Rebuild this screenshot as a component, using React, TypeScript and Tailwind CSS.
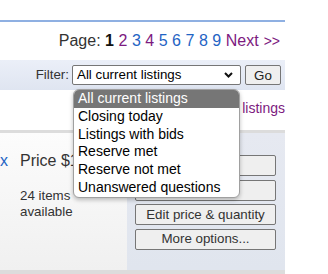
import React from 'react';

const pages = [
  { n: '1', cls: 'font-bold text-[#111]' },
  { n: '2', cls: 'text-[#7d1a80]' },
  { n: '3', cls: 'text-[#1f64c4]' },
  { n: '4', cls: 'text-[#7d1a80]' },
  { n: '5', cls: 'text-[#1f64c4]' },
  { n: '6', cls: 'text-[#1f64c4]' },
  { n: '7', cls: 'text-[#1f64c4]' },
  { n: '8', cls: 'text-[#1f64c4]' },
  { n: '9', cls: 'text-[#1f64c4]' },
];

const filters = [
  'All current listings',
  'Closing today',
  'Listings with bids',
  'Reserve met',
  'Reserve not met',
  'Unanswered questions',
];

const actions = ['Relist', 'Sell similar', 'Edit price & quantity', 'More options...'];

export default function App() {
  return (
    <div className="relative w-[328px] h-[274px] overflow-hidden bg-white font-['Liberation_Sans',Arial,sans-serif] text-[#333]">
      <div className="w-[285px]">
        <div className="h-[20px]" />
        <div className="h-[2px] bg-[#8fb0e2]" />

        {/* Pagination */}
        <div className="h-[38px] flex items-center justify-end pr-[5px] text-[16px] whitespace-nowrap">
          <span className="text-[#333]">Page:</span>
          {pages.map((p) => (
            <span key={p.n} className={'ml-[4.5px] ' + p.cls}>{p.n}</span>
          ))}
          <span className="ml-[4.5px] text-[#7d1a80]">Next</span>
          <span className="ml-[5px] text-[14px] text-[#7d1a80]">&gt;&gt;</span>
        </div>

        {/* Filter bar */}
        <div className="h-[30px] flex items-center justify-end pr-[4px] bg-linear-to-b from-[#ebeff8] to-[#dfe5f1] text-[13.33px]">
          <span className="mr-[3px] text-[#333]">Filter:</span>
          <div className="w-[169px] h-[20px] flex items-center justify-between bg-white border border-[#767676] rounded-[2px] pl-[4px] pr-[7px] text-black">
            <span>All current listings</span>
            <svg width="9" height="6" viewBox="0 0 9 6">
              <path d="M1 1 L4.5 4.5 L8 1" fill="none" stroke="#111" strokeWidth="2" />
            </svg>
          </div>
          <button className="ml-[4px] w-[36px] h-[20px] bg-[#efefef] border border-[#767676] rounded-[2px] text-[13.33px] text-[#222]">
            Go
          </button>
        </div>

        {/* Links row */}
        <div className="h-[40px] flex items-start justify-end pt-[8px] text-[14px]">
          <span className="text-[#7d1a80]">View all listings</span>
        </div>

        <div className="h-[3px] bg-[#dcdcdc]" />

        {/* Listing card */}
        <div className="h-[137px] flex">
          <div className="w-[127px] bg-linear-to-b from-[#fcfcfc] to-[#f0f0f0] pt-[19px] flex">
            <span className="w-[20px] text-[16px] text-[#1f64c4] leading-[18px]">x</span>
            <div className="flex flex-col">
              <span className="text-[16px] leading-[18px] whitespace-nowrap">Price $12.00</span>
              <div className="mt-[18px] text-[13.33px] leading-[16px]">
                <div>24 items</div>
                <div>available</div>
              </div>
            </div>
          </div>
          <div className="flex-1 bg-linear-to-b from-[#e6e9f1] to-[#e0e5ee] pl-[8px] pt-[22px] flex flex-col gap-[3.5px]">
            {actions.map((a) => (
              <button
                key={a}
                className="w-[141px] h-[21px] bg-[#efefef] border border-[#767676] rounded-[2px] text-[13.33px] text-[#333] leading-none"
              >
                {a}
              </button>
            ))}
          </div>
        </div>
        <div className="h-[4px] bg-[#dcdcdc]" />
      </div>

      {/* Open select menu */}
      <div className="absolute left-[73px] top-[89px] w-[167px] bg-white border border-[#a0a0a0] rounded-[6px] shadow-[0_2px_4px_rgba(0,0,0,0.25)] overflow-hidden text-[14px] text-black">
        {filters.map((f, i) => (
          <div
            key={f}
            className={
              'h-[17.8px] leading-[17.8px] pl-[4px] whitespace-nowrap ' +
              (i === 0 ? 'bg-[#767676] text-white' : '')
            }
          >
            {f}
          </div>
        ))}
      </div>
    </div>
  );
}
